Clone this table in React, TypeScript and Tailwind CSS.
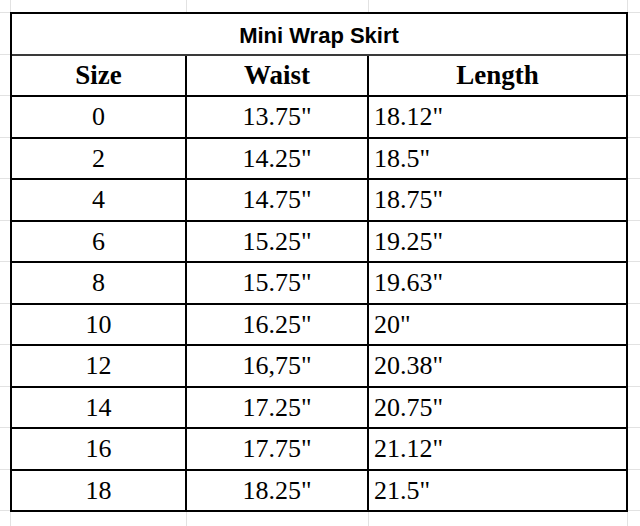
const rows: [string, string, string][] = [
  ['0', '13.75"', '18.12"'],
  ['2', '14.25"', '18.5"'],
  ['4', '14.75"', '18.75"'],
  ['6', '15.25"', '19.25"'],
  ['8', '15.75"', '19.63"'],
  ['10', '16.25"', '20"'],
  ['12', '16,75"', '20.38"'],
  ['14', '17.25"', '20.75"'],
  ['16', '17.75"', '21.12"'],
  ['18', '18.25"', '21.5"'],
];

const serif = { fontFamily: '"Liberation Serif", "Times New Roman", serif' };

function Strip({ className }: { className: string }) {
  // spreadsheet gridlines showing outside the bordered table
  return (
    <div className={`flex ${className}`}>
      <div className="w-[11px] shrink-0 border-r border-[#e2e2e2]" />
      <div className="w-[176px] shrink-0 border-r border-[#e2e2e2]" />
      <div className="w-[182px] shrink-0 border-r border-[#e2e2e2]" />
      <div className="w-[259px] shrink-0 border-r border-[#e2e2e2]" />
      <div className="flex-1" />
    </div>
  );
}

function Side({ className }: { className: string }) {
  return (
    <div className={`flex flex-col border-t border-[#e2e2e2] ${className}`}>
      {Array.from({ length: 12 }).map((_, i) => (
        <div key={i} className="h-[41.5px] shrink-0 border-b border-[#e2e2e2]" />
      ))}
    </div>
  );
}

export default function App() {
  return (
    <div className="w-[640px] h-[526px] bg-white flex flex-col overflow-hidden text-black">
      <Strip className="h-[12px] shrink-0" />
      <div className="flex">
        <Side className="w-[10px] shrink-0" />
        <div className="w-[618px] shrink-0 border-2 border-black flex flex-col">
          {/* Title */}
          <div
            className="h-[41.5px] border-b-2 border-[#3a3a3a] flex items-center justify-center pt-[3px] font-bold text-[22px]"
            style={{ fontFamily: '"Liberation Sans", Arial, sans-serif' }}
          >
            Mini Wrap Skirt
          </div>
          {/* Header */}
          <div className="h-[41.5px] border-b-2 border-black flex font-bold text-[27px]" style={serif}>
            <div className="w-[175px] border-r-2 border-black flex items-center justify-center">Size</div>
            <div className="w-[182px] border-r-2 border-black flex items-center justify-center">Waist</div>
            <div className="flex-1 flex items-center justify-center">Length</div>
          </div>
          {rows.map(([size, waist, length], i) => (
            <div
              key={size}
              className={`flex text-[26px] ${i === rows.length - 1 ? 'h-[39.5px]' : 'h-[41.5px] border-b-2 border-black'}`}
              style={serif}
            >
              <div className="w-[175px] border-r-2 border-black flex items-center justify-center">{size}</div>
              <div className="w-[182px] border-r-2 border-black flex items-center justify-center">{waist}</div>
              <div className="flex-1 flex items-center pl-[5px]">{length}</div>
            </div>
          ))}
        </div>
        <Side className="flex-1" />
      </div>
      <Strip className="flex-1" />
    </div>
  );
}
